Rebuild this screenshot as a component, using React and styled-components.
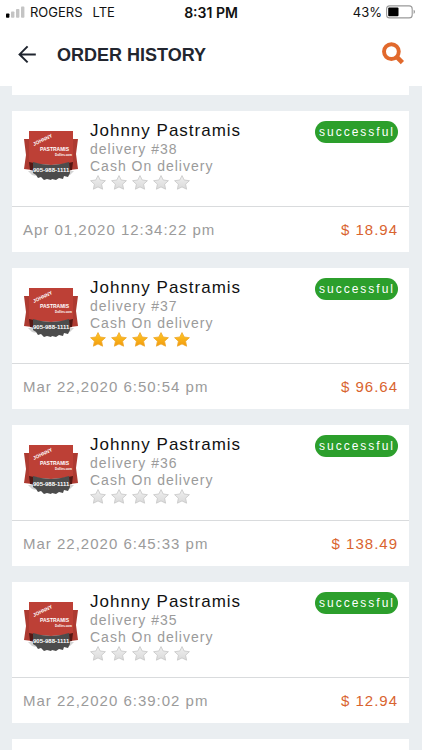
import React from "react";
import styled, { createGlobalStyle } from "styled-components";

const orders = [
  { id: 38, date: "Apr 01,2020 12:34:22 pm", total: "$ 18.94", rated: false },
  { id: 37, date: "Mar 22,2020 6:50:54 pm", total: "$ 96.64", rated: true },
  { id: 36, date: "Mar 22,2020 6:45:33 pm", total: "$ 138.49", rated: false },
  { id: 35, date: "Mar 22,2020 6:39:02 pm", total: "$ 12.94", rated: false }
];

const SignalIcon = () => (
  <svg width="19" height="12" viewBox="0 0 19 12" aria-hidden="true">
    <rect x="0" y="7.5" width="3.4" height="4.3" rx="0.8" fill="#000" />
    <rect x="5" y="5.5" width="3.4" height="6.3" rx="0.8" fill="#c4c4c4" />
    <rect x="10" y="3" width="3.4" height="8.8" rx="0.8" fill="#c4c4c4" />
    <rect x="15" y="0.6" width="3.4" height="11.2" rx="0.8" fill="#c4c4c4" />
  </svg>
);

const BatteryIcon = () => (
  <svg width="30" height="14" viewBox="0 0 30 14" aria-hidden="true">
    <rect x="0.6" y="0.9" width="25.6" height="12" rx="3" fill="#fff" stroke="#999" strokeWidth="1.1" />
    <rect x="2.2" y="2.5" width="10.3" height="8.8" rx="1" fill="#000" />
    <path d="M27.6 4.8c1.9.7 1.9 3.5 0 4.2z" fill="#999" />
  </svg>
);

const BackIcon = () => (
  <svg width="20" height="20" viewBox="0 0 20 20" aria-hidden="true">
    <path d="M18.8 9.4H2.6M10.6 1.4l-8 8 8 8" fill="none" stroke="#1e242e" strokeWidth="2" />
  </svg>
);

const SearchIcon = () => (
  <svg width="24" height="26" viewBox="0 0 24 26" aria-hidden="true">
    <circle cx="10.4" cy="9.6" r="7.4" fill="none" stroke="#e1692c" strokeWidth="3.9" />
    <path d="M15 14.2l6.4 6.4" fill="none" stroke="#e1692c" strokeWidth="4.6" />
  </svg>
);

const Star = ({ on }) => (
  <svg width="16" height="15" viewBox="0 0 16 15" aria-hidden="true">
    <path
      d="M8 .6l2.2 4.4 5.2.7-3.8 3.5 1 5L8 11.9l-4.6 2.3 1-5L.6 5.7 5.8 5z"
      fill={on ? "url(#star-on)" : "url(#star-off)"}
      stroke={on ? "#eda72c" : "#c6c6c6"}
      strokeWidth="0.8"
      strokeLinejoin="round"
    />
  </svg>
);

const StarGradients = () => (
  <Defs width="0" height="0" aria-hidden="true">
    <defs>
      <linearGradient id="star-on" x1="0" y1="0" x2="0" y2="1">
        <stop offset="0" stopColor="#ffc928" />
        <stop offset="1" stopColor="#f29a0c" />
      </linearGradient>
      <linearGradient id="star-off" x1="0" y1="0" x2="0" y2="1">
        <stop offset="0" stopColor="#f0f0f0" />
        <stop offset="1" stopColor="#dadada" />
      </linearGradient>
    </defs>
  </Defs>
);

const ShopLogo = () => (
  <Logo viewBox="0 0 56 54" role="img" aria-label="Johnny Pastramis">
    <path d="M5 42h6l2 5-4-1zM51 42h-6l-2 5 4-1z" fill="#d3d3d3" />
    <path d="M1 10h8v31l-8-1 2-14zM47 10h8l-2 15 2 15-8 1z" fill="#ad3a31" />
    <path d="M6 33l6-3v12l-5-1zM50 33l-6-3v12l5-1z" fill="#551814" />
    <path d="M6 2h44v31q-22 6-44 0z" fill="#bd4036" />
    <path
      d="M10 33q18 6 36 0l1 11-2 4-4-1-1 3-4-1-3 2-4-1-1 1-4-1-3 1-3-3-3 1-2-3-3-2z"
      fill="#4c4c4c"
    />
    <LogoText x="11" y="17" size={5} transform="rotate(-26 11 17)">JOHNNY</LogoText>
    <LogoText x="17" y="22" size={5}>PASTRAMIS</LogoText>
    <LogoText x="32" y="27" size={3}>Dollies.com</LogoText>
    <LogoText x="10" y="43" size={6}>905-988-1111</LogoText>
  </Logo>
);

const OrderCard = ({ order }) => (
  <Card>
    <Summary>
      <ShopLogo />
      <Infos>
        <Name>Johnny Pastramis</Name>
        <Detail>delivery #{order.id}</Detail>
        <Detail>Cash On delivery</Detail>
        <Stars role="img" aria-label={order.rated ? "5 stars" : "Not rated"}>
          {[1, 2, 3, 4, 5].map(n => (
            <Star key={n} on={order.rated} />
          ))}
        </Stars>
      </Infos>
      <Status>successful</Status>
    </Summary>
    <Footer>
      <time>{order.date}</time>
      <Total>{order.total}</Total>
    </Footer>
  </Card>
);

export default function App() {
  return (
    <Screen>
      <GlobalStyle />
      <StarGradients />
      <StatusBar>
        <Carrier>
          <SignalIcon />
          <span>ROGERS</span>
          <Network>LTE</Network>
        </Carrier>
        <Clock>8:31 PM</Clock>
        <Battery>
          <span>43%</span>
          <BatteryIcon />
        </Battery>
      </StatusBar>
      <NavBar>
        <IconButton aria-label="Back">
          <BackIcon />
        </IconButton>
        <Title>ORDER HISTORY</Title>
        <IconButton aria-label="Search">
          <SearchIcon />
        </IconButton>
      </NavBar>
      <List>
        <CardEdge height={9} />
        {orders.map(order => (
          <OrderCard key={order.id} order={order} />
        ))}
        <CardEdge height={11} />
      </List>
    </Screen>
  );
}

const GlobalStyle = createGlobalStyle`
  * {
    box-sizing: border-box;
  }
  body {
    margin: 0;
    background: #eaeef1;
    font-family: "Liberation Sans", Arial, sans-serif;
  }
`;

const Screen = styled.div`
  display: flex;
  flex-direction: column;
  height: 100vh;
  overflow: hidden;
`;

const Defs = styled.svg`
  position: absolute;
`;

const StatusBar = styled.div`
  display: grid;
  grid-template-columns: 1fr auto 1fr;
  align-items: center;
  flex: none;
  height: 24px;
  padding: 0 6px;
  background: #fff;
  color: #111;
  font-family: Inter, sans-serif;
  font-size: 13px;
`;

const Carrier = styled.div`
  display: flex;
  align-items: center;
  gap: 5px;
`;

const Network = styled.span`
  margin-left: 5px;
`;

const Clock = styled.div`
  font-size: 14px;
  font-weight: 600;
`;

const Battery = styled.div`
  display: flex;
  align-items: center;
  justify-content: flex-end;
  gap: 4px;
`;

const NavBar = styled.header`
  display: flex;
  align-items: center;
  flex: none;
  height: 62px;
  padding: 0 17px;
  background: #fff;
`;

const IconButton = styled.button`
  display: flex;
  padding: 0;
  border: 0;
  background: none;
  cursor: pointer;
`;

const Title = styled.h1`
  flex: 1;
  margin: 0 0 0 20px;
  color: #22262f;
  font-size: 18px;
  line-height: 20px;
`;

const List = styled.main`
  display: flex;
  flex-direction: column;
  gap: 16px;
  padding: 0 13px 0 12px;
`;

const CardEdge = styled.div`
  flex: none;
  height: ${props => props.height}px;
  background: #fff;
`;

const Card = styled.article`
  flex: none;
  background: #fff;
  letter-spacing: 1px;
`;

const Summary = styled.div`
  display: flex;
  align-items: flex-start;
  gap: 11px;
  padding: 10px 11px 16px;
  border-bottom: 1px solid #d9dbdd;
`;

const Logo = styled.svg`
  flex: none;
  width: 56px;
  height: 54px;
  margin-top: 8px;
`;

const LogoText = styled.text`
  fill: #fff;
  font-family: "Liberation Sans", sans-serif;
  font-size: ${props => props.size}px;
  font-weight: bold;
  letter-spacing: 0;
`;

const Infos = styled.div`
  flex: 1;
`;

const Name = styled.h2`
  margin: 0;
  color: #111;
  font-size: 17px;
  font-weight: normal;
  line-height: 20px;
`;

const Detail = styled.div`
  color: #9b9b9b;
  font-size: 14px;
  line-height: 17px;
`;

const Stars = styled.div`
  display: flex;
  gap: 5px;
`;

const Status = styled.span`
  padding: 0 3px 0 4px;
  border-radius: 11px;
  background: #2c9f2c;
  color: #fff;
  font-size: 12px;
  letter-spacing: 2px;
  line-height: 22px;
`;

const Footer = styled.div`
  display: flex;
  align-items: center;
  justify-content: space-between;
  height: 45px;
  padding: 0 11px;
  color: #9b9b9b;
  font-size: 15px;
`;

const Total = styled.span`
  color: #d9642f;
`;
